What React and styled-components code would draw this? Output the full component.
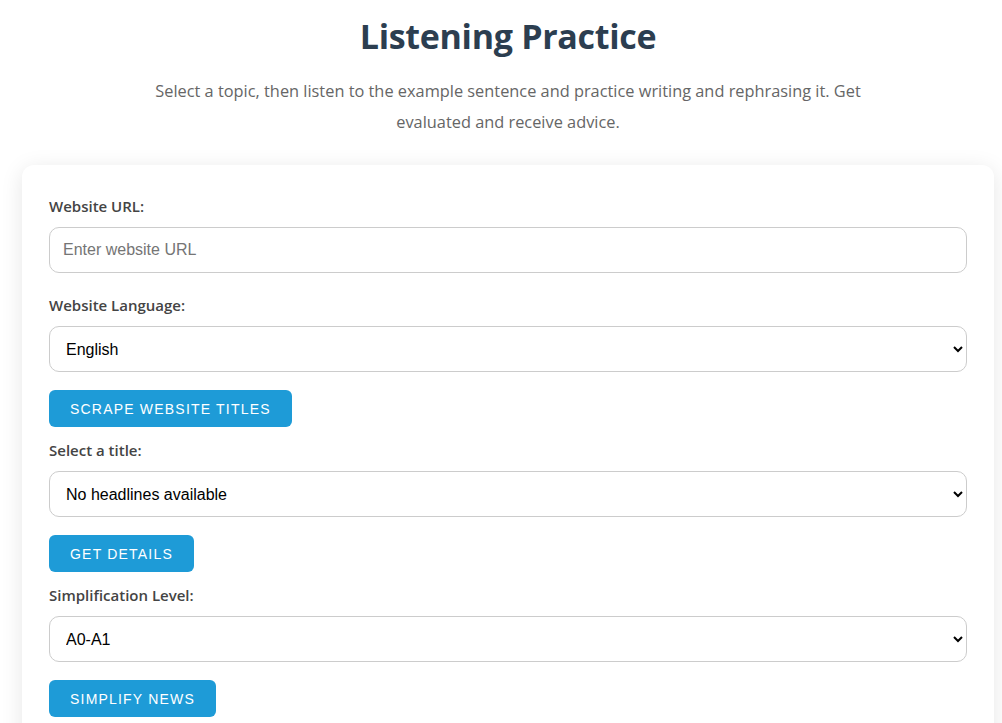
import React from 'react';
import styled, { createGlobalStyle } from 'styled-components';

const GlobalStyle = createGlobalStyle`
  body {
    margin: 0;
    background: #ffffff;
    font-family: "Open Sans", "Noto Sans", sans-serif;
  }
`;

const Page = styled.div`
  margin: 0 8px 0 22px;
  display: flex;
  flex-direction: column;
  align-items: center;
`;

const Title = styled.h1`
  margin: 13px 0 0;
  font-size: 34px;
  font-weight: 700;
  color: #2c3e50;
  letter-spacing: -0.3px;
`;

const Intro = styled.p`
  max-width: 720px;
  margin: 17px 0 27px;
  text-align: center;
  font-size: 16.35px;
  line-height: 31px;
  color: #666666;
`;

const Card = styled.div`
  align-self: stretch;
  background: #ffffff;
  border-radius: 12px;
  box-shadow: 0 4px 22px rgba(0, 0, 0, 0.1);
  padding: 31px 27px 20px;
`;

const Label = styled.label`
  display: block;
  font-size: 15px;
  font-weight: 600;
  color: #444444;
  line-height: 20px;
  margin-bottom: ${props => props.gap || '11px'};
`;

const fieldBase = `
  display: block;
  width: 100%;
  box-sizing: border-box;
  height: 46px;
  border: 1px solid #cccccc;
  border-radius: 10px;
  font-family: "Liberation Sans", Arial, sans-serif;
  font-size: 16px;
  color: #000000;
  background: #ffffff;
`;

const TextInput = styled.input`
  ${fieldBase}
  padding: 0 13px;
  margin-bottom: 22px;

  &::placeholder {
    color: #757575;
  }
`;

const Select = styled.select`
  ${fieldBase}
  padding: 0 12px;
  margin-bottom: 18px;
`;

const Button = styled.button`
  display: block;
  height: 37px;
  padding: 0 21px;
  border: none;
  border-radius: 6px;
  background: #1e9bd7;
  color: #ffffff;
  font-family: "Liberation Sans", Arial, sans-serif;
  font-size: 14px;
  letter-spacing: 1.2px;
  text-transform: uppercase;
  margin-bottom: 13px;
  cursor: pointer;
`;

export default function App() {
  return (
    <Page>
      <GlobalStyle />
      <Title>Listening Practice</Title>
      <Intro>
        Select a topic, then listen to the example sentence and practice writing and rephrasing it. Get
        evaluated and receive advice.
      </Intro>
      <Card>
        <Label>Website URL:</Label>
        <TextInput placeholder="Enter website URL" />
        <Label>Website Language:</Label>
        <Select defaultValue="en">
          <option value="en">English</option>
        </Select>
        <Button>Scrape Website Titles</Button>
        <Label>Select a title:</Label>
        <Select>
          <option>No headlines available</option>
        </Select>
        <Button>Get Details</Button>
        <Label>Simplification Level:</Label>
        <Select>
          <option>A0-A1</option>
        </Select>
        <Button>Simplify News</Button>
      </Card>
    </Page>
  );
}
